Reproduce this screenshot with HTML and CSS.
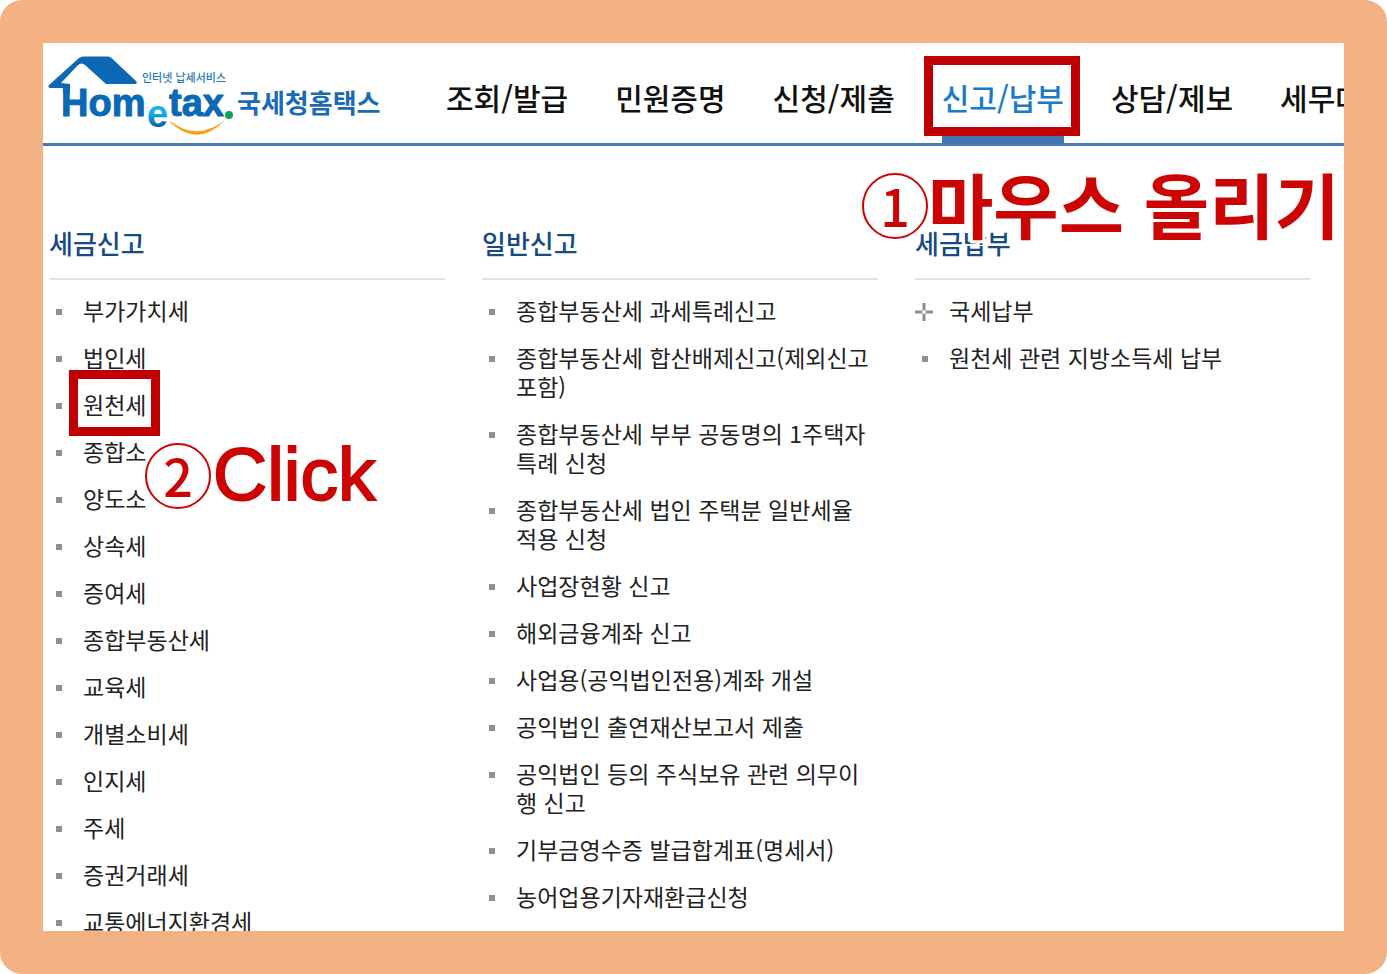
FILE: index.html
```html
<!DOCTYPE html>
<html lang="ko">
<head>
    <meta charset="UTF-8">
    <meta name="viewport" content="width=device-width, initial-scale=1.0">
    <title>국세청 홈택스</title>
    <link rel="stylesheet" href="styles.css">
</head>
<body>

<div class="frame">
    <div class="screen">
        <header class="header">
            <a class="logo" href="#">
                <svg width="340" height="88" viewBox="0 0 340 88" role="img" aria-label="Hometax 국세청홈택스">
                    <defs>
                        <linearGradient id="eFill" x1="0" y1="0" x2="0" y2="1">
                            <stop offset="0.45" stop-color="#12b4ee"/>
                            <stop offset="0.8" stop-color="#0a64b4"/>
                        </linearGradient>
                    </defs>
                    <!-- roof -->
                    <path class="blue" d="M6 30L36 3Q38 1.500 40 1.500L65 1.500Q67 1.500 69 3.500L93 26Q95 29 92 29L63 29L42 10Q38.500 7 35 10L18 28L27 29L27 38L20 38L20 33L8 33Q4 33 6 30Z"/>
                    <text class="word" x="18" y="61">Hom</text>
                    <text class="word-e" x="104" y="72">e</text>
                    <text class="word" x="126" y="61">tax</text>
                    <circle cx="186" cy="60" r="4" fill="#0aa648"/>
                    <path d="M127 66Q154 87 182 65Q156 93 128 68Z" fill="#f7a11b"/>
                    <text class="sub" x="99" y="27">인터넷 납세서비스</text>
                    <text class="name" x="194" y="58">국세청홈택스</text>
                </svg>
            </a>
            <nav class="nav">
                <a href="#">조회/발급</a>
                <a href="#">민원증명</a>
                <a href="#">신청/제출</a>
                <a href="#" class="active">신고/납부</a>
                <a href="#">상담/제보</a>
                <a href="#">세무대리</a>
            </nav>
        </header>

        <main class="menu">
            <section>
                <h2>세금신고</h2>
                <ul>
                    <li><a href="#">부가가치세</a></li>
                    <li><a href="#">법인세</a></li>
                    <li><a href="#" class="marked">원천세</a></li>
                    <li><a href="#">종합소</a></li>
                    <li><a href="#">양도소</a></li>
                    <li><a href="#">상속세</a></li>
                    <li><a href="#">증여세</a></li>
                    <li><a href="#">종합부동산세</a></li>
                    <li><a href="#">교육세</a></li>
                    <li><a href="#">개별소비세</a></li>
                    <li><a href="#">인지세</a></li>
                    <li><a href="#">주세</a></li>
                    <li><a href="#">증권거래세</a></li>
                    <li><a href="#">교통에너지환경세</a></li>
                </ul>
            </section>
            <section>
                <h2>일반신고</h2>
                <ul>
                    <li><a href="#">종합부동산세 과세특례신고</a></li>
                    <li><a href="#">종합부동산세 합산배제신고(제외신고포함)</a></li>
                    <li><a href="#">종합부동산세 부부 공동명의 1주택자 특례 신청</a></li>
                    <li><a href="#">종합부동산세 법인 주택분 일반세율 적용 신청</a></li>
                    <li><a href="#">사업장현황 신고</a></li>
                    <li><a href="#">해외금융계좌 신고</a></li>
                    <li><a href="#">사업용(공익법인전용)계좌 개설</a></li>
                    <li><a href="#">공익법인 출연재산보고서 제출</a></li>
                    <li><a href="#">공익법인 등의 주식보유 관련 의무이행 신고</a></li>
                    <li><a href="#">기부금영수증 발급합계표(명세서)</a></li>
                    <li><a href="#">농어업용기자재환급신청</a></li>
                </ul>
            </section>
            <section>
                <h2>세금납부</h2>
                <ul>
                    <li class="expand">
                        <svg width="18" height="18" viewBox="0 0 18 18" aria-hidden="true">
                            <path d="M9 0V7M9 11V18M0 9H7M11 9H18" stroke="#8c8c8c" stroke-width="3"/>
                            <path d="M7 7H11V11H7Z" fill="#fff" stroke="#b4b4b4"/>
                        </svg>
                        <a href="#">국세납부</a>
                    </li>
                    <li><a href="#">원천세 관련 지방소득세 납부</a></li>
                </ul>
            </section>
        </main>

        <div class="step step-one"><span class="num">1</span><span class="step-text">마우스 올리기</span></div>
        <div class="step step-two"><span class="num">2</span><span class="step-text">Click</span></div>
    </div>
</div>

</body>
</html>
```
FILE: styles.css
```css
*,
*::before,
*::after {
    box-sizing: border-box;
}

body {
    margin: 0;
    background: #fff;
    font-family: "Noto Sans CJK KR", sans-serif;
    color: #222;
}

a {
    color: inherit;
    text-decoration: none;
}

/* Orange border around the screen */
.frame {
    height: 100vh;
    padding: 43px;
    background: #f4b183;
    border-radius: 22px;
}

.screen {
    position: relative;
    height: 100%;
    background: #fff;
    overflow: hidden;
}

/* Header */
.header {
    display: flex;
    height: 103px;
    border-bottom: 3px solid #4a7ab2;
}

.logo {
    flex: none;
    width: 340px;
    margin-top: 12px;
}

.logo svg {
    display: block;
}

.blue {
    fill: #0a68b4;
}

.word,
.word-e {
    font: bold 38px "Liberation Sans", sans-serif;
    fill: #0a68b4;
}

.word {
    stroke: #0a68b4;
    stroke-width: 1px;
    stroke-linejoin: round;
}

.word-e {
    fill: url(#eFill);
}

.sub {
    font-size: 11px;
    font-weight: 500;
    fill: #2a78bc;
}

.name {
    font-size: 26px;
    font-weight: bold;
    fill: #1a6ab6;
}

.nav {
    display: flex;
    gap: 47px;
    margin-left: 63px;
    white-space: nowrap;
    font-size: 30px;
    font-weight: 500;
    line-height: 100px;
}

.nav a {
    position: relative;
    flex: none;
    height: 100px;
    padding-top: 4px;
    color: #111;
}

.nav .active {
    color: #1a7cc8;
    border-bottom: 7px solid #4474b4;
}

.nav .active::after {
    content: "";
    position: absolute;
    top: 13px;
    left: -18px;
    right: -16px;
    height: 80px;
    border: 9px solid #c00000;
}

/* Menu columns */
.menu {
    display: grid;
    grid-template-columns: repeat(3, 1fr);
    gap: 37px;
    padding: 78px 33px 0 6px;
}

h2 {
    margin: 0;
    height: 56px;
    border-bottom: 2px solid #e2e2e2;
    font-size: 26px;
    font-weight: 500;
    line-height: 38px;
    color: #184a86;
}

ul {
    display: flex;
    flex-direction: column;
    gap: 18px;
    margin: 0;
    padding: 16px 0 0;
    list-style: none;
}

li {
    display: flex;
    padding-right: 6px;
    font-size: 23px;
    line-height: 29px;
}

li::before {
    content: "";
    flex: none;
    width: 6px;
    height: 6px;
    margin: 13px 21px 0 7px;
    background: #909090;
}

.expand::before {
    display: none;
}

.expand svg {
    flex: none;
    margin: 7px 16px 0 0;
}

.marked {
    position: relative;
}

.marked::after {
    content: "";
    position: absolute;
    top: -20px;
    left: -14px;
    right: -14px;
    height: 66px;
    border: 9px solid #c00000;
}

/* Step labels over the screen */
.step {
    position: absolute;
    display: flex;
    align-items: center;
    white-space: nowrap;
    color: #cc0404;
}

.num {
    width: 66px;
    height: 66px;
    border: 2px solid #cc0404;
    border-radius: 50%;
    background: #fff;
    font-size: 52px;
    font-weight: 500;
    line-height: 60px;
    text-align: center;
}

.step-text {
    paint-order: stroke fill;
    -webkit-text-stroke: 6px #fff;
}

.step-one {
    top: 113px;
    left: 819px;
}

.step-one .step-text {
    padding-bottom: 8px;
    font-size: 71px;
    font-weight: bold;
    line-height: 92px;
}

.step-two {
    top: 383px;
    left: 102px;
}

.step-two .step-text {
    padding: 0 0 4px 2px;
    font-family: "Liberation Sans", sans-serif;
    font-size: 75px;
    line-height: 96px;
    -webkit-text-stroke: 2px #cc0404;
}
```
